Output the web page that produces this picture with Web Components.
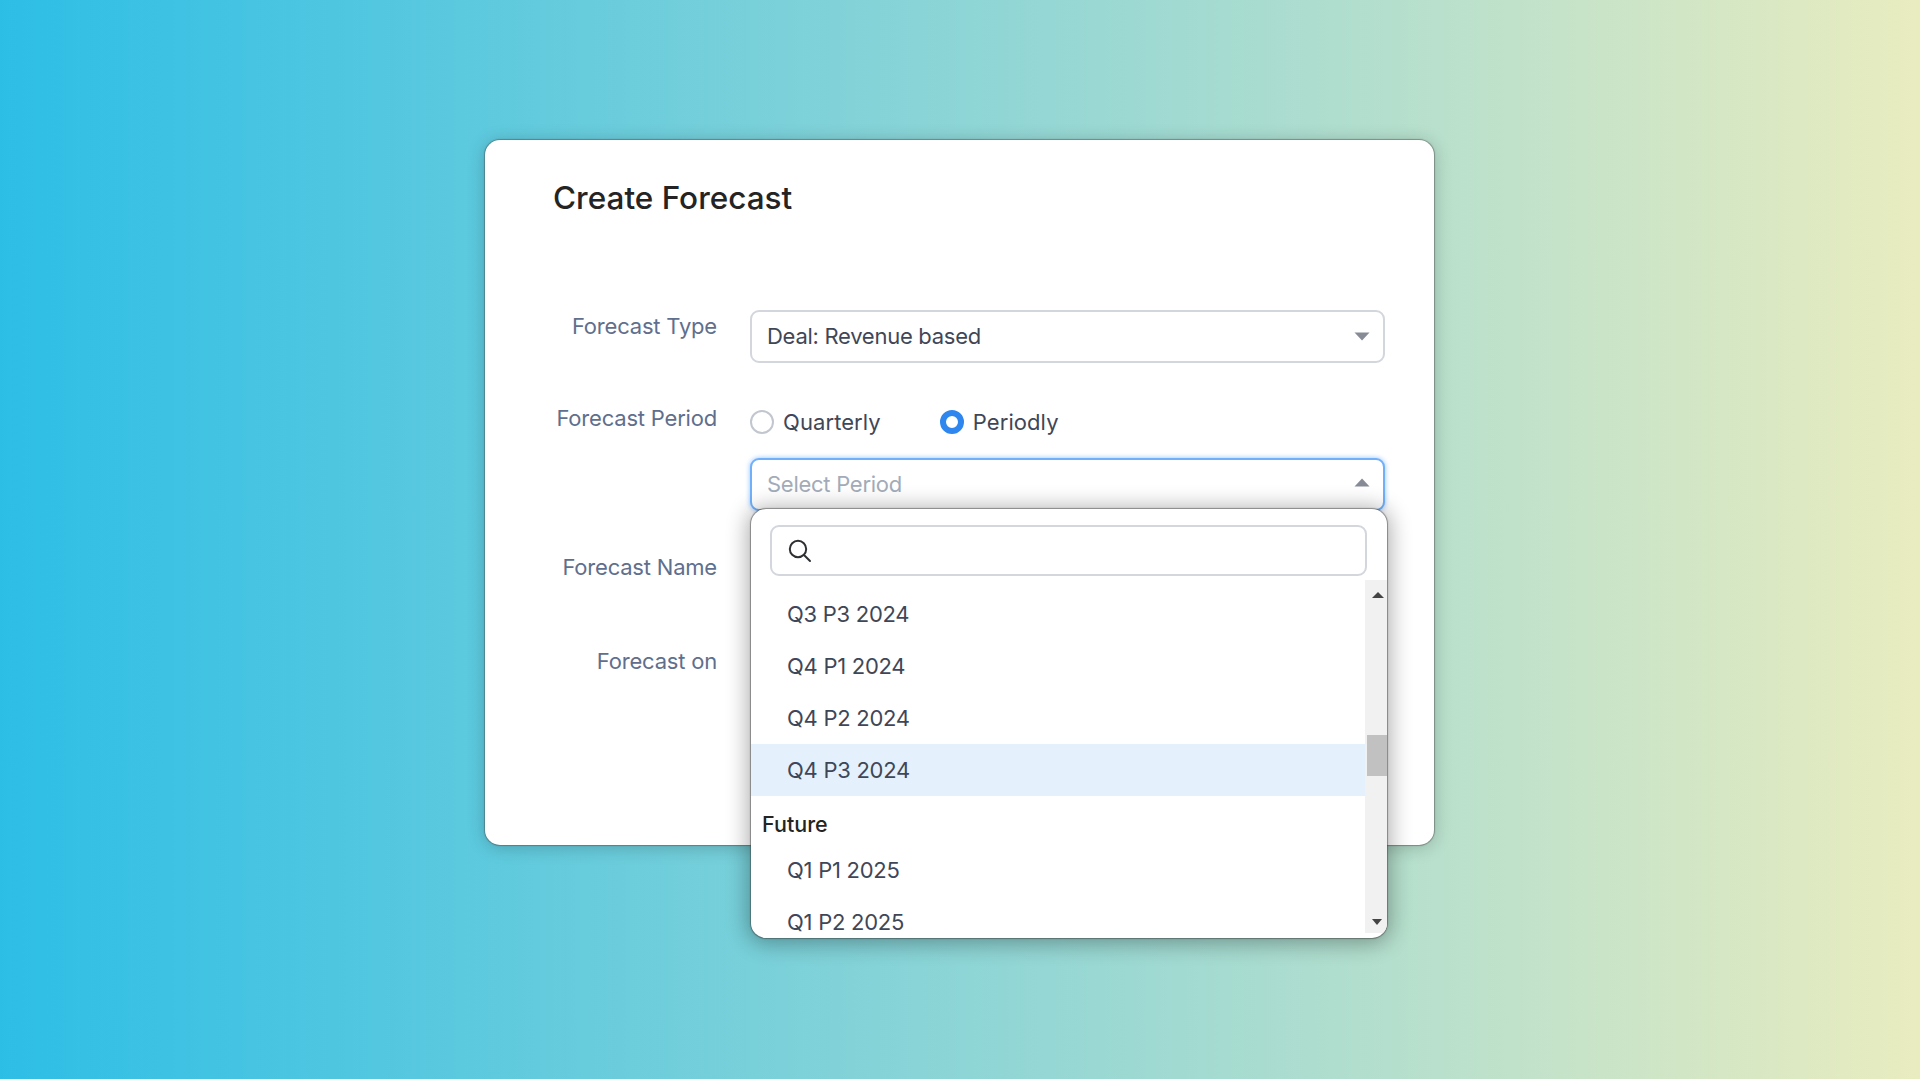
<!DOCTYPE html>
<html><head><meta charset="utf-8"><title>Create Forecast</title>
<style>
html,body{margin:0;height:100%}
body{background:linear-gradient(90deg,#2dbee6 0%,#8dd5d6 50%,#b9e0cc 75%,#e9ecbf 100%);font-family:Inter,"Liberation Sans",sans-serif;overflow:hidden;padding-top:140px;box-sizing:border-box}
</style></head><body>
<template id="t-card"><style>
:host{display:block;box-sizing:border-box;width:949px;height:705px;margin:0 0 0 485px;background:#fff;border-radius:15px;box-shadow:0 0 1px 1px rgba(70,70,70,.45),0 2px 18px rgba(0,0,0,.22);padding:39px 0 0}
h1{margin:0 0 0 68px;font:500 31.5px/38px Inter,"Liberation Sans",sans-serif;color:#242424;letter-spacing:0}
.rows{margin-top:93px;display:flex;flex-direction:column}
</style><h1><slot name="title"></slot></h1><div class="rows"><slot></slot></div></template>

<template id="t-row"><style>
:host{display:grid;grid-template-columns:232px 635px;column-gap:33px;margin-bottom:var(--gap,0)}
.l{text-align:right;font:400 22px/32px Inter,"Liberation Sans",sans-serif;color:#5f6f8d;letter-spacing:-.2px}
</style><div class="l"><slot name="label"></slot></div><div class="f"><slot></slot></div></template>

<template id="t-select"><style>
:host{display:block;position:relative;box-sizing:border-box;height:53px;border:2px solid #d3d6dd;border-radius:9px;background:#fff;padding:0 15px;font:400 22px/49px Inter,"Liberation Sans",sans-serif;color:#3f4757;letter-spacing:-.27px}
:host([open]){border-color:#70b0fa;box-shadow:0 0 5px rgba(80,160,255,.65);color:#a3abb9}
svg{position:absolute;right:13px;top:20px}
:host([open]) svg{transform:rotate(180deg);top:18px}
</style><slot></slot><svg width="16" height="9" viewBox="0 0 16 9"><path d="M.5 .5h15L8 8.5z" fill="#868b96"/></svg><slot name="menu"></slot></template>

<template id="t-radio"><style>
:host{display:inline-flex;align-items:center;gap:9px;font:400 22px/32px Inter,"Liberation Sans",sans-serif;color:#3f4757;letter-spacing:.08px}
i{box-sizing:border-box;width:24px;height:24px;border-radius:50%;border:2px solid #c2c6ce;background:#fff}
:host([checked]) i{border:6px solid #2f86ee}
</style><i></i><slot></slot></template>

<template id="t-menu"><style>
:host{display:block;position:absolute;z-index:5;left:-1px;top:49px;box-sizing:border-box;width:636px;height:429px;background:#fff;border-radius:15px;overflow:hidden;color:#3f4757}
.search{box-sizing:border-box;margin:16px 20px 0 19px;height:51px;border:2px solid #d3d6dd;border-radius:9px;display:flex;align-items:center;padding-left:15px}
.body{position:relative;height:358px;margin-top:4px;overflow:hidden}
.list{padding-top:8px}
.bar{position:absolute;right:0;top:0;bottom:5px;width:22px;background:#f1f1f1}
.thumb{position:absolute;right:0;top:155px;width:20px;height:41px;background:#c1c1c1}
.bar svg{position:absolute;left:7px}
</style>
<div class="search"><svg width="26" height="26" viewBox="0 0 26 26" fill="none" stroke="#2f3033" stroke-width="2"><circle cx="11" cy="11" r="8.2"/><path d="M17 17l6 6" stroke-linecap="round"/></svg></div>
<div class="body"><div class="list"><slot></slot></div>
<div class="bar"><svg style="top:11px" width="12" height="8" viewBox="0 0 12 8"><path d="M0 7h12L6 1z" fill="#444"/></svg><div class="thumb"></div><svg style="bottom:7px" width="10" height="7" viewBox="0 0 10 7"><path d="M0 0h10L5 6z" fill="#444"/></svg></div></div></template>

<template id="t-opt"><style>
:host{display:block;box-sizing:border-box;height:52px;margin-right:22px;padding-left:36px;font:400 22px/52px Inter,"Liberation Sans",sans-serif;color:#3f4757;letter-spacing:-.27px}
:host([active]){background:#e4f1fd}
:host([group]){height:48px;padding-left:11px;font-weight:500;font-size:21.5px;line-height:56px;color:#242424;letter-spacing:0}
</style><slot></slot></template>

<script>
function def(n,t){customElements.define(n,class extends HTMLElement{constructor(){super();this.attachShadow({mode:'open'}).appendChild(document.getElementById(t).content.cloneNode(true));}});}
[['fc-card','t-card'],['fc-row','t-row'],['fc-select','t-select'],['fc-radio','t-radio'],['fc-menu','t-menu'],['fc-opt','t-opt']].forEach(a=>def(a[0],a[1]));
</script>

<fc-card>
<span slot="title">Create Forecast</span>
<fc-row style="--gap:39px"><span slot="label">Forecast Type</span><fc-select>Deal: Revenue based</fc-select></fc-row>
<fc-row style="--gap:40px"><span slot="label">Forecast Period</span>
<div style="display:flex;gap:59px;height:32px;margin:3.5px 0 20.5px"><fc-radio>Quarterly</fc-radio><fc-radio checked>Periodly</fc-radio></div>
<fc-select open style="position:relative;z-index:4">Select Period
<fc-menu slot="menu" style="box-shadow:0 0 1px 1px rgba(60,60,60,.5),0 2px 22px 3px rgba(0,0,0,.33)">
<fc-opt>Q3 P3 2024</fc-opt><fc-opt>Q4 P1 2024</fc-opt><fc-opt>Q4 P2 2024</fc-opt><fc-opt active>Q4 P3 2024</fc-opt><fc-opt group>Future</fc-opt><fc-opt>Q1 P1 2025</fc-opt><fc-opt>Q1 P2 2025</fc-opt>
</fc-menu></fc-select></fc-row>
<fc-row style="--gap:62px"><span slot="label">Forecast Name</span><div style="height:32px"></div></fc-row>
<fc-row><span slot="label">Forecast on</span><div style="height:32px"></div></fc-row>
</fc-card>
</body></html>
